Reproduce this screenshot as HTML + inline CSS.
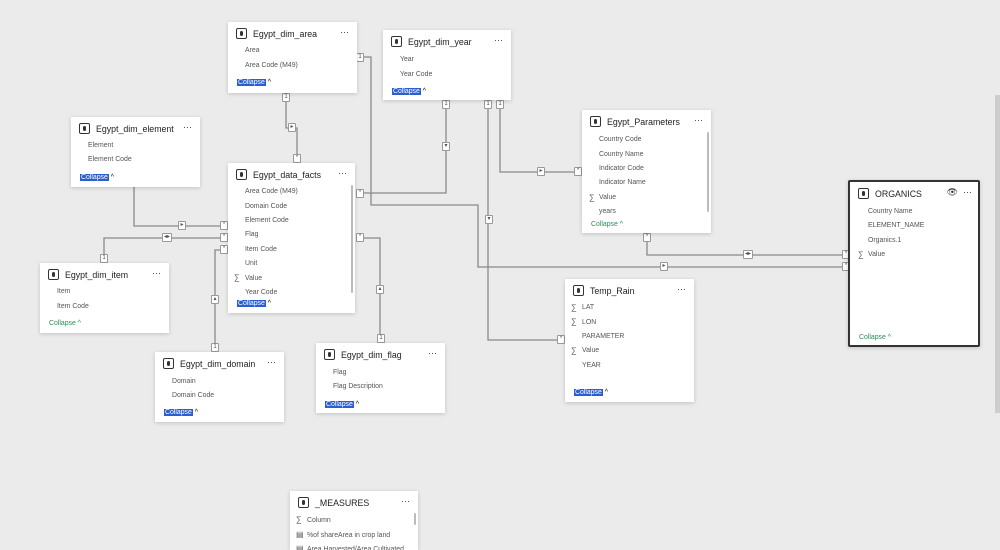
<!DOCTYPE html>
<html style="width:1000px;height:550px;overflow:hidden"><head><meta charset="utf-8"><style>
*{margin:0;padding:0;box-sizing:border-box}
body{width:1000px;height:550px;overflow:hidden;background:#ebebeb;font-family:"Liberation Sans",sans-serif;position:relative}
.c{position:absolute;background:#fff;box-shadow:0 1px 4px rgba(0,0,0,.18);overflow:hidden}
.c.sel{border:2px solid #333;border-radius:2px}
.h{position:absolute;left:8px;top:6px;font-size:8.8px;color:#222;white-space:nowrap;display:flex;align-items:center}
.ic{width:11px;height:11px;border:1.3px solid #333;border-radius:2px;margin-right:6px;position:relative;display:inline-block}
.ic:after{content:"";position:absolute;left:2.5px;top:1.5px;width:3px;height:5px;background:#333;border-radius:2px}
.dots{position:absolute;right:8px;top:5px;font-size:9px;color:#333}
.r{position:absolute;font-size:6.9px;color:#555;white-space:nowrap}
.s{position:absolute;font-size:8px;color:#555}
.col{position:absolute;font-size:6.9px;white-space:nowrap}
.col b{font-weight:normal;background:#2b5fd0;color:#fff;padding:0 1px}
.col.g{color:#2e8b57}
.sb{position:absolute;width:2px;background:#bbb;border-radius:1px}
.m{position:absolute;background:#fff;border:1px solid #999;border-radius:1px;font-size:6px;color:#555;text-align:center;line-height:7px;width:8px;height:9px}
</style></head><body>
<svg width="1000" height="550" style="position:absolute;left:0;top:0" fill="none" stroke="#8a8a8a" stroke-width="1.3">
<path d="M286 93V128H297V163"/>
<path d="M357 57H371V205H478V267H848"/>
<path d="M446 100V193H356"/>
<path d="M488 100V340H565"/>
<path d="M500 100V172H582"/>
<path d="M647 233V255H848"/>
<path d="M356 238H380V343"/>
<path d="M134 187V226H228"/>
<path d="M104 263V238H228"/>
<path d="M215 352V250H228"/>
</svg>
<div class="m" style="left:282px;top:93px">1</div>
<div class="m" style="left:288px;top:123px">▸</div>
<div class="m" style="left:293px;top:154px">*</div>
<div class="m" style="left:356px;top:53px">1</div>
<div class="m" style="left:442px;top:100px">1</div>
<div class="m" style="left:442px;top:142px">▾</div>
<div class="m" style="left:356px;top:189px">*</div>
<div class="m" style="left:484px;top:100px">1</div>
<div class="m" style="left:496px;top:100px">1</div>
<div class="m" style="left:485px;top:215px">▾</div>
<div class="m" style="left:557px;top:335px">*</div>
<div class="m" style="left:537px;top:167px">▸</div>
<div class="m" style="left:574px;top:167px">*</div>
<div class="m" style="left:643px;top:233px">*</div>
<div class="m" style="left:743px;top:250px;width:10px">◂▸</div>
<div class="m" style="left:660px;top:262px">▸</div>
<div class="m" style="left:842px;top:250px">*</div>
<div class="m" style="left:842px;top:262px">*</div>
<div class="m" style="left:356px;top:233px">*</div>
<div class="m" style="left:376px;top:285px">▴</div>
<div class="m" style="left:377px;top:334px">1</div>
<div class="m" style="left:178px;top:221px">▸</div>
<div class="m" style="left:162px;top:233px;width:10px">◂▸</div>
<div class="m" style="left:220px;top:221px">*</div>
<div class="m" style="left:220px;top:233px">*</div>
<div class="m" style="left:220px;top:245px">*</div>
<div class="m" style="left:100px;top:254px">1</div>
<div class="m" style="left:211px;top:295px">▴</div>
<div class="m" style="left:211px;top:343px">1</div>

<div class="c" style="left:228px;top:22px;width:129px;height:71px"><div class="h"><span class="ic"></span>Egypt_dim_area</div><div class="dots">···</div>
<div class="r" style="left:17px;top:25px">Area</div><div class="r" style="left:17px;top:40px">Area Code (M49)</div><div class="col" style="left:9px;top:57px"><b>Collapse</b> ^</div></div>

<div class="c" style="left:383px;top:30px;width:128px;height:70px"><div class="h"><span class="ic"></span>Egypt_dim_year</div><div class="dots">···</div>
<div class="r" style="left:17px;top:26px">Year</div><div class="r" style="left:17px;top:41px">Year Code</div><div class="col" style="left:9px;top:58px"><b>Collapse</b> ^</div></div>

<div class="c" style="left:71px;top:117px;width:129px;height:70px"><div class="h"><span class="ic"></span>Egypt_dim_element</div><div class="dots">···</div>
<div class="r" style="left:17px;top:25px">Element</div><div class="r" style="left:17px;top:39px">Element Code</div><div class="col" style="left:9px;top:57px"><b>Collapse</b> ^</div></div>

<div class="c" style="left:582px;top:110px;width:129px;height:123px"><div class="h"><span class="ic"></span>Egypt_Parameters</div><div class="dots">···</div>
<div class="sb" style="left:125px;top:22px;height:80px"></div>
<div class="r" style="left:17px;top:26px">Country Code</div><div class="r" style="left:17px;top:41px">Country Name</div><div class="r" style="left:17px;top:55px">Indicator Code</div><div class="r" style="left:17px;top:69px">Indicator Name</div><div class="s" style="left:7px;top:83px">∑</div><div class="r" style="left:17px;top:84px">Value</div><div class="r" style="left:17px;top:98px">years</div><div class="col g" style="left:9px;top:111px">Collapse ^</div></div>

<div class="c" style="left:228px;top:163px;width:127px;height:150px"><div class="h"><span class="ic"></span>Egypt_data_facts</div><div class="dots">···</div>
<div class="sb" style="left:123px;top:22px;height:108px"></div>
<div class="r" style="left:17px;top:25px">Area Code (M49)</div><div class="r" style="left:17px;top:40px">Domain Code</div><div class="r" style="left:17px;top:54px">Element Code</div><div class="r" style="left:17px;top:68px">Flag</div><div class="r" style="left:17px;top:83px">Item Code</div><div class="r" style="left:17px;top:97px">Unit</div><div class="s" style="left:6px;top:110px">∑</div><div class="r" style="left:17px;top:112px">Value</div><div class="r" style="left:17px;top:126px">Year Code</div><div class="col" style="left:9px;top:137px"><b>Collapse</b> ^</div></div>

<div class="c sel" style="left:848px;top:180px;width:132px;height:167px"><div class="h"><span class="ic"></span>ORGANICS</div><div class="dots" style="right:6px">👁&nbsp; ···</div>
<div class="r" style="left:18px;top:26px">Country Name</div><div class="r" style="left:18px;top:40px">ELEMENT_NAME</div><div class="r" style="left:18px;top:55px">Organics.1</div><div class="s" style="left:8px;top:68px">∑</div><div class="r" style="left:18px;top:69px">Value</div><div class="col g" style="left:9px;top:152px">Collapse ^</div></div>

<div class="c" style="left:40px;top:263px;width:129px;height:70px"><div class="h"><span class="ic"></span>Egypt_dim_item</div><div class="dots">···</div>
<div class="r" style="left:17px;top:25px">Item</div><div class="r" style="left:17px;top:40px">Item Code</div><div class="col g" style="left:9px;top:57px">Collapse ^</div></div>

<div class="c" style="left:565px;top:279px;width:129px;height:123px"><div class="h"><span class="ic"></span>Temp_Rain</div><div class="dots">···</div>
<div class="s" style="left:6px;top:24px">∑</div><div class="r" style="left:17px;top:25px">LAT</div><div class="s" style="left:6px;top:38px">∑</div><div class="r" style="left:17px;top:40px">LON</div><div class="r" style="left:17px;top:54px">PARAMETER</div><div class="s" style="left:6px;top:67px">∑</div><div class="r" style="left:17px;top:68px">Value</div><div class="r" style="left:17px;top:83px">YEAR</div><div class="col" style="left:9px;top:110px"><b>Collapse</b> ^</div></div>

<div class="c" style="left:155px;top:352px;width:129px;height:70px"><div class="h"><span class="ic"></span>Egypt_dim_domain</div><div class="dots">···</div>
<div class="r" style="left:17px;top:26px">Domain</div><div class="r" style="left:17px;top:40px">Domain Code</div><div class="col" style="left:9px;top:57px"><b>Collapse</b> ^</div></div>

<div class="c" style="left:316px;top:343px;width:129px;height:70px"><div class="h"><span class="ic"></span>Egypt_dim_flag</div><div class="dots">···</div>
<div class="r" style="left:17px;top:26px">Flag</div><div class="r" style="left:17px;top:40px">Flag Description</div><div class="col" style="left:9px;top:58px"><b>Collapse</b> ^</div></div>

<div class="c" style="left:290px;top:491px;width:128px;height:59px"><div class="h"><span class="ic"></span>_MEASURES</div><div class="dots">···</div>
<div class="sb" style="left:124px;top:22px;height:12px"></div>
<div class="s" style="left:6px;top:24px">∑</div><div class="r" style="left:17px;top:26px">Column</div><div class="s" style="left:6px;top:39px">▤</div><div class="r" style="left:17px;top:41px">%of shareArea in crop land</div><div class="s" style="left:6px;top:53px">▤</div><div class="r" style="left:17px;top:55px">Area Harvested/Area Cultivated</div></div>

<div style="position:absolute;left:995px;top:95px;width:5px;height:318px;background:#cdcdcd"></div>
</body></html>
